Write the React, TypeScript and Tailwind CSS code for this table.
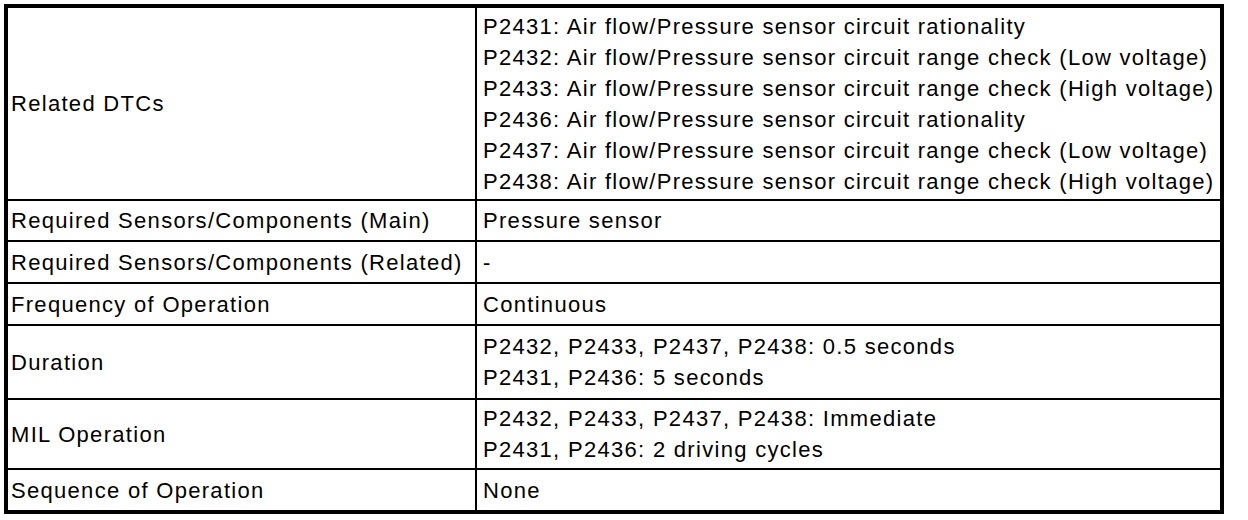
const rows: { label: string; lines: string[]; h: string }[] = [
  {
    label: "Related DTCs",
    lines: [
      "P2431: Air flow/Pressure sensor circuit rationality",
      "P2432: Air flow/Pressure sensor circuit range check (Low voltage)",
      "P2433: Air flow/Pressure sensor circuit range check (High voltage)",
      "P2436: Air flow/Pressure sensor circuit rationality",
      "P2437: Air flow/Pressure sensor circuit range check (Low voltage)",
      "P2438: Air flow/Pressure sensor circuit range check (High voltage)",
    ],
    h: "h-[191px]",
  },
  { label: "Required Sensors/Components (Main)", lines: ["Pressure sensor"], h: "h-[41px]" },
  { label: "Required Sensors/Components (Related)", lines: ["-"], h: "h-[42px]" },
  { label: "Frequency of Operation", lines: ["Continuous"], h: "h-[42px]" },
  {
    label: "Duration",
    lines: ["P2432, P2433, P2437, P2438: 0.5 seconds", "P2431, P2436: 5 seconds"],
    h: "h-[74px]",
  },
  {
    label: "MIL Operation",
    lines: ["P2432, P2433, P2437, P2438: Immediate", "P2431, P2436: 2 driving cycles"],
    h: "h-[70px]",
  },
  { label: "Sequence of Operation", lines: ["None"], h: "h-[42px]" },
];

export default function App() {
  return (
    <div className="w-[1248px] h-[520px] bg-white p-1 font-['Liberation_Sans',Arial,sans-serif] text-[22px] tracking-[1.3px] leading-[31px] text-black">
      <div className="w-[1220px] border-4 border-black">
        {rows.map((row, i) => (
          <div
            key={row.label}
            className={`flex ${row.h} ${i > 0 ? "border-t-2 border-black" : ""}`}
          >
            <div className="w-[469px] shrink-0 border-r-2 border-black flex items-center pl-[3px] whitespace-nowrap">
              {row.label}
            </div>
            <div className="flex-1 flex flex-col justify-center pl-[6px] whitespace-nowrap">
              {row.lines.map((line) => (
                <div key={line}>{line}</div>
              ))}
            </div>
          </div>
        ))}
      </div>
    </div>
  );
}
